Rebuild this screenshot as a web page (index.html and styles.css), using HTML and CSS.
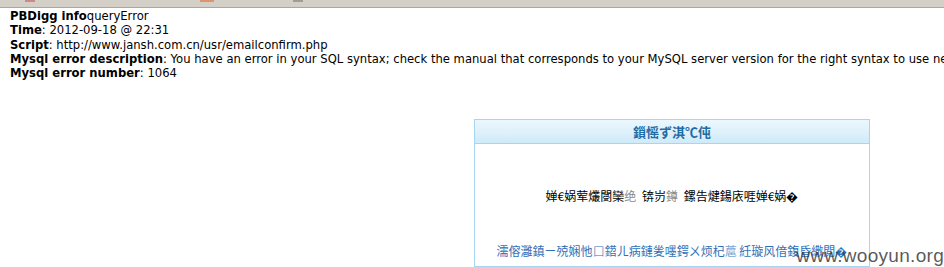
FILE: index.html
```html
<!DOCTYPE html>
<html lang="zh-CN">
<head>
  <meta charset="UTF-8" />
  <title>PBDigg info</title>
  <link rel="stylesheet" href="styles.css">
</head>
<body>
  <div class="toolbar">
    <span class="tab-tip tip-red"></span>
    <span class="tab-tip tip-orange"></span>
    <span class="tab-tip tip-gray"></span>
  </div>

  <div class="error-info">
    <div><b>PBDigg info</b>queryError</div>
    <div><b>Time</b>: 2012-09-18 @ 22:31</div>
    <div><b>Script</b>: http://www.jansh.com.cn/usr/emailconfirm.php</div>
    <div><b>Mysql error description</b>: You have an error in your SQL syntax; check the manual that corresponds to your MySQL server version for the right syntax to use near</div>
    <div><b>Mysql error number</b>: 1064</div>
  </div>

  <div class="msgbox">
    <div class="msgbox-head">鎻愮ず淇℃伅</div>
    <div class="msgbox-body">
      <p class="msg">婵€娲荤爜閿欒<span class="pua">绝</span> 锛岃<span class="pua">鐏</span> 鏍告煡鍚庡啀婵€娲�</p>
      <p class="back"><a href="#">濡傛灉鎮ㄧ殑娴忚<span class="box">口</span>鍣ㄦ病鏈夎嚜鍔ㄨ烦杞<span class="pua-link">蔰</span> 紝璇风偣鍑昏繖閲�</a></p>
    </div>
  </div>

  <div class="watermark">www.wooyun.org</div>
</body>
</html>
```

FILE: styles.css
```css
body {
  margin: 0;
  background-color: #fff;
  font-family: "DejaVu Sans", Verdana, sans-serif;
  font-size: 11.6px;
  color: #000;
  height: 267px;
  overflow: hidden;
  position: relative;
}

.toolbar {
  height: 7px;
  background-color: #d4d0c8;
  border-bottom: 1px solid #a9a7a0;
  display: flex;
  align-items: flex-start;
}

.tab-tip {
  height: 2px;
}

.tip-red {
  width: 10px;
  margin-left: 25px;
  background-color: #c98a8a;
}

.tip-orange {
  width: 14px;
  margin-left: 165px;
  background-color: #de9470;
}

.tip-gray {
  width: 10px;
  margin-left: 79px;
  background-color: #a19d95;
}

.error-info {
  padding: 1px 10px 0;
  line-height: 14.3px;
  white-space: nowrap;
  overflow: hidden;
}

.msgbox {
  width: 394px;
  margin: 39px 0 0 474px;
  border: 1px solid #a8d5ef;
  font-family: "Noto Sans CJK SC", sans-serif;
  font-size: 12px;
  text-align: center;
}

.msgbox-head {
  height: 23px;
  line-height: 23px;
  border-bottom: 1px solid #a8d5ef;
  background: linear-gradient(#ebf7fd, #e0f1fb 50%, #cfeaf9);
  color: #1f6da6;
  font-weight: bold;
  font-size: 13px;
}

.msgbox-body {
  padding: 44px 0 7px;
}

.msg {
  margin: 0;
  line-height: 16px;
  white-space: nowrap;
  word-spacing: 3px;
}

.pua {
  color: #8a8a8a;
}

.back {
  margin: 39px 0 0;
  line-height: 16px;
  white-space: nowrap;
}

.back a {
  color: #2f6fb6;
  text-decoration: none;
}

.box {
  font-weight: 300;
}

.pua-link {
  color: #7aa6d4;
}

.watermark {
  position: absolute;
  right: 0;
  top: 245px;
  font-family: "Liberation Sans", Arial, sans-serif;
  font-size: 19px;
  color: rgba(60, 60, 60, 0.85);
  letter-spacing: 0.3px;
}
```
